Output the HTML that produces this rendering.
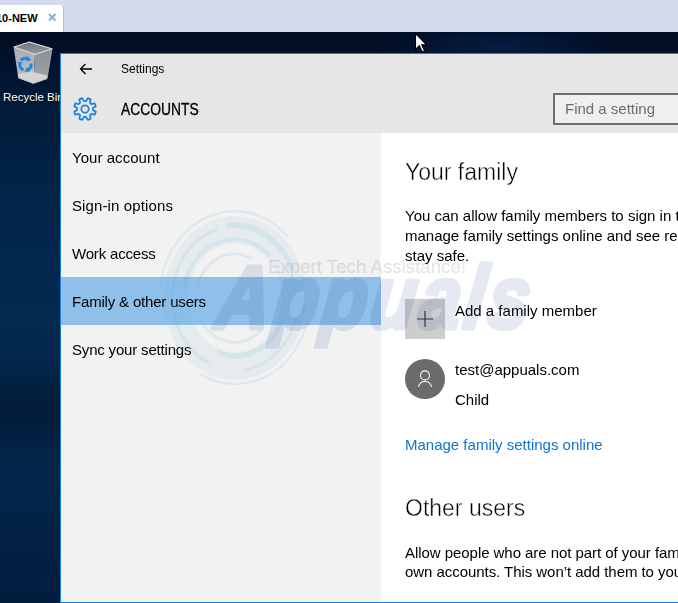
<!DOCTYPE html>
<html><head><meta charset="utf-8">
<style>
*{margin:0;padding:0;box-sizing:border-box}
html,body{width:678px;height:603px;overflow:hidden}
body{position:relative;font-family:"Liberation Sans",sans-serif;background:#001834}
.abs{position:absolute}
#topbar{left:0;top:0;width:678px;height:32px;background:#d5daee}
#tab{left:-10px;top:5px;width:74px;height:27px;background:#fff;border-top-right-radius:3px;border-right:1px solid #b9bdcc}
#tabtxt{left:-4px;top:12px;font-size:11px;font-weight:bold;color:#000;white-space:nowrap}
#tabx{left:47.5px;top:13px;width:8.5px;height:8.5px}
#desk{left:0;top:32px;width:678px;height:571px;background:linear-gradient(180deg,#010c22 0px,#011a38 68px,#02254a 168px,#032a4f 288px,#03274d 328px,#011c38 378px,#03274b 438px,#022145 508px,#011d3d 571px)}
#rb{left:3px;top:91px;font-size:11.5px;color:#fff;white-space:nowrap;text-shadow:0 1px 2px #000}
#win{will-change:transform;left:60px;top:53px;width:640px;height:550px;border:1px solid #1a7fd8;border-right:none;background:#fff;overflow:hidden}
#title{left:0;top:0;width:640px;height:79px;background:#e6e6e6}
#nav{left:0;top:79px;width:320px;height:470px;background:#f1f2f1}
.t{position:absolute;white-space:nowrap;color:#000}
.nav{font-size:15px;left:11px;letter-spacing:-0.18px}
#sel{left:0;top:223px;width:320px;height:48px;background:#8fc0ea}
#search{left:492px;top:39px;width:160px;height:32px;border:2px solid #6e6e6e;background:#efefef}
.c{font-size:15px;color:#000}
.h{font-size:23px;color:#000;-webkit-text-stroke:0.45px #fff}
#wm{left:0;top:0;width:678px;height:603px;pointer-events:none}
</style></head><body>
<div id="topbar" class="abs"></div>
<div id="tab" class="abs"></div>
<div id="tabtxt" class="abs">10-NEW</div>
<svg id="tabx" class="abs" viewBox="0 0 10 10"><path d="M1.2 1.2L8.8 8.8M8.8 1.2L1.2 8.8" stroke="#88b3da" stroke-width="2.6"/></svg>
<div id="desk" class="abs"></div>
<div class="abs" style="left:0;top:32px;width:678px;height:30px;background:radial-gradient(ellipse 120px 30px at 500px 15px,rgba(8,45,95,0.45),rgba(8,45,95,0))"></div>

<!-- recycle bin -->
<svg class="abs" style="left:0;top:0" width="60" height="90" viewBox="0 0 60 90">
  <defs>
    <linearGradient id="lf" x1="0" y1="0" x2="0" y2="1"><stop offset="0" stop-color="#a9adb0"/><stop offset="1" stop-color="#bfc2c4"/></linearGradient>
    <linearGradient id="rf" x1="0" y1="0" x2="0" y2="1"><stop offset="0" stop-color="#8b9296"/><stop offset="1" stop-color="#9ea4a8"/></linearGradient>
    <linearGradient id="tp" x1="0" y1="0" x2="0" y2="1"><stop offset="0" stop-color="#6f7376"/><stop offset="1" stop-color="#9a9ea1"/></linearGradient>
  </defs>
  <path d="M14 47 L35 54.6 L33.3 83.4 L18.7 78 Z" fill="url(#lf)"/>
  <path d="M35 54.6 L52 48.7 L47 78.8 L33.3 83.4 Z" fill="url(#rf)"/>
  <path d="M17.6 74.5 L31 71.5 L47.6 75.5 L47 78.8 L33.3 83.4 L18.7 78 Z" fill="#d2d4d5"/>
  <path d="M14 47 L29.2 42.1 L52 48.7 L35 54.6 Z" fill="url(#tp)" stroke="#dcdedf" stroke-width="1.1" stroke-linejoin="round"/>
  <path d="M14 47 L18.7 78 L33.3 83.4 L47 78.8 L52 48.7" fill="none" stroke="#c9cbcc" stroke-width="0.6"/>
  <g fill="none" stroke="#1e88e5" stroke-width="3.1">
    <path d="M21 60.5 A5.8 5.8 0 0 1 28.5 59"/>
    <path d="M31 63.5 A5.8 5.8 0 0 1 27.5 70"/>
    <path d="M23.5 70 A5.8 5.8 0 0 1 19.8 64"/>
  </g>
  <g fill="#1e88e5">
    <path d="M27 56 L31.5 60 L26.5 61.5Z"/>
    <path d="M30 71.5 L24.5 72 L27 67Z"/>
    <path d="M17.5 61.5 L22.5 62.5 L19.5 66.5Z"/>
  </g>
</svg>
<div id="rb" class="abs">Recycle Bin</div>

<!-- cursor -->
<svg class="abs" style="left:414px;top:32px" width="16" height="22" viewBox="0 0 16 22">
  <path d="M1.5 1.5 V17.5 L5.3 13.8 L8.3 20 L10.6 19 L7.7 12.8 L12.6 12.8 Z" fill="#fff" stroke="#000" stroke-width="1.1" stroke-linejoin="miter"/>
</svg>

<div id="win" class="abs">
  <div id="title" class="abs"></div>
  <svg class="abs" style="left:18px;top:9px" width="14" height="12" viewBox="0 0 14 12"><path d="M13 6H1.5M6.5 1L1.5 6L6.5 11" fill="none" stroke="#000" stroke-width="1.3"/></svg>
  <div class="t" style="left:60px;top:8px;font-size:12px">Settings</div>
  <svg class="abs" style="left:11px;top:42px" width="26" height="26" viewBox="0 0 26 26">
    <path fill="none" stroke="#1a7fd8" stroke-width="1.7" stroke-linejoin="round" d="M14.04 5.07 L15.80 2.16 L18.68 3.35 L17.87 6.65 L19.35 8.13 L22.65 7.32 L23.84 10.20 L20.93 11.96 L20.93 14.04 L23.84 15.80 L22.65 18.68 L19.35 17.87 L17.87 19.35 L18.68 22.65 L15.80 23.84 L14.04 20.93 L11.96 20.93 L10.20 23.84 L7.32 22.65 L8.13 19.35 L6.65 17.87 L3.35 18.68 L2.16 15.80 L5.07 14.04 L5.07 11.960 L2.16 10.20 L3.35 7.32 L6.65 8.13 L8.13 6.65 L7.32 3.35 L10.20 2.16 L11.96 5.07Z"/>
    <circle cx="13" cy="13" r="3.7" fill="none" stroke="#1a7fd8" stroke-width="1.7"/>
  </svg>
  <div class="t" style="left:60px;top:47px;font-size:16px;transform:scaleX(0.865);transform-origin:0 0;-webkit-text-stroke:0.3px #000">ACCOUNTS</div>
  <div id="search" class="abs"><div class="t" style="left:10px;top:5px;font-size:15px;color:#6d6d6d">Find a setting</div></div>

  <div id="nav" class="abs"></div>
  <div id="sel" class="abs"></div>
  <div class="t nav" style="top:95px;letter-spacing:0.05px">Your account</div>
  <div class="t nav" style="top:143px;letter-spacing:0.12px">Sign-in options</div>
  <div class="t nav" style="top:191px">Work access</div>
  <div class="t nav" style="top:239px">Family &amp; other users</div>
  <div class="t nav" style="top:287px">Sync your settings</div>

  <div class="t h" style="left:344px;top:105px">Your family</div>
  <div class="t c" style="left:344px;top:152px;line-height:20px">You can allow family members to sign in to this PC. Adults can<br>manage family settings online and see recent activity to help kids<br>stay safe.</div>
  <div class="abs" style="left:344px;top:245px;width:40px;height:40px;background:#cdcdcd"></div>
  <svg class="abs" style="left:356px;top:257px" width="16" height="16" viewBox="0 0 16 16"><path d="M8 0V16M0 8H16" stroke="#333" stroke-width="1.2"/></svg>
  <div class="t c" style="left:394px;top:248px">Add a family member</div>
  <div class="abs" style="left:344px;top:305px;width:40px;height:40px;border-radius:50%;background:#6b6b6b"></div>
  <svg class="abs" style="left:354px;top:314px" width="20" height="20" viewBox="0 0 20 20"><circle cx="10" cy="7.4" r="4.5" fill="none" stroke="#fff" stroke-width="1.1"/><path d="M3.5 18.8a6.6 6.6 0 0 1 13 0" fill="none" stroke="#fff" stroke-width="1.1"/></svg>
  <div class="t c" style="left:394px;top:307px">test@appuals.com</div>
  <div class="t c" style="left:394px;top:337px">Child</div>
  <div class="t c" style="left:344px;top:382px;color:#0e74d2">Manage family settings online</div>
  <div class="t h" style="left:344px;top:441px">Other users</div>
  <div class="t c" style="left:344px;top:489px;line-height:19px;letter-spacing:-0.05px">Allow people who are not part of your family to sign in with their<br>own accounts. This won’t add them to your family.</div>
</div>

<!-- watermark -->
<svg id="wm" class="abs" width="678" height="603" viewBox="0 0 678 603">
  <g fill="none" stroke="#3f9ad0" stroke-opacity="0.11" transform="translate(235 298) scale(0.87 1)">
    <circle cx="0" cy="0" r="68" stroke-width="28" stroke-opacity="0.06"/>
    <path d="M-86 -10 A86 86 0 0 1 60 -62" stroke-width="2.2"/>
    <path d="M84 20 A86 86 0 0 1 -40 76" stroke-width="2.2"/>
    <path d="M-72 -5 A72 72 0 0 1 -20 -69" stroke-width="3"/>
    <path d="M-10 -72 A72 72 0 0 1 66 -28" stroke-width="6"/>
    <path d="M70 20 A72 72 0 0 1 10 72" stroke-width="3"/>
    <path d="M-30 65 A72 72 0 0 1 -70 15" stroke-width="4"/>
    <path d="M-58 -10 A58 58 0 0 1 40 -42" stroke-width="4"/>
    <path d="M55 20 A58 58 0 0 1 -20 54" stroke-width="5"/>
    <path d="M-44 -8 A44 44 0 0 1 20 -39" stroke-width="3"/>
    <path d="M-40 20 A44 44 0 0 0 30 32" stroke-width="3"/>
  </g>
  <text x="268" y="273" font-family="Liberation Sans" font-size="18.7" fill="#505050" fill-opacity="0.12" stroke="#505050" stroke-opacity="0.12" stroke-width="0.3">Expert Tech Assistance!</text>
  <g transform="translate(214 328) scale(1 1.2) skewX(-8)" opacity="0.115">
    <text x="0" y="0" font-family="Liberation Sans" font-weight="bold" font-style="italic" font-size="74" fill="#1e3c8c" stroke="#1e3c8c" stroke-width="4" stroke-linejoin="round" letter-spacing="3.5">Appuals</text>
  </g>
</svg>
</body></html>
